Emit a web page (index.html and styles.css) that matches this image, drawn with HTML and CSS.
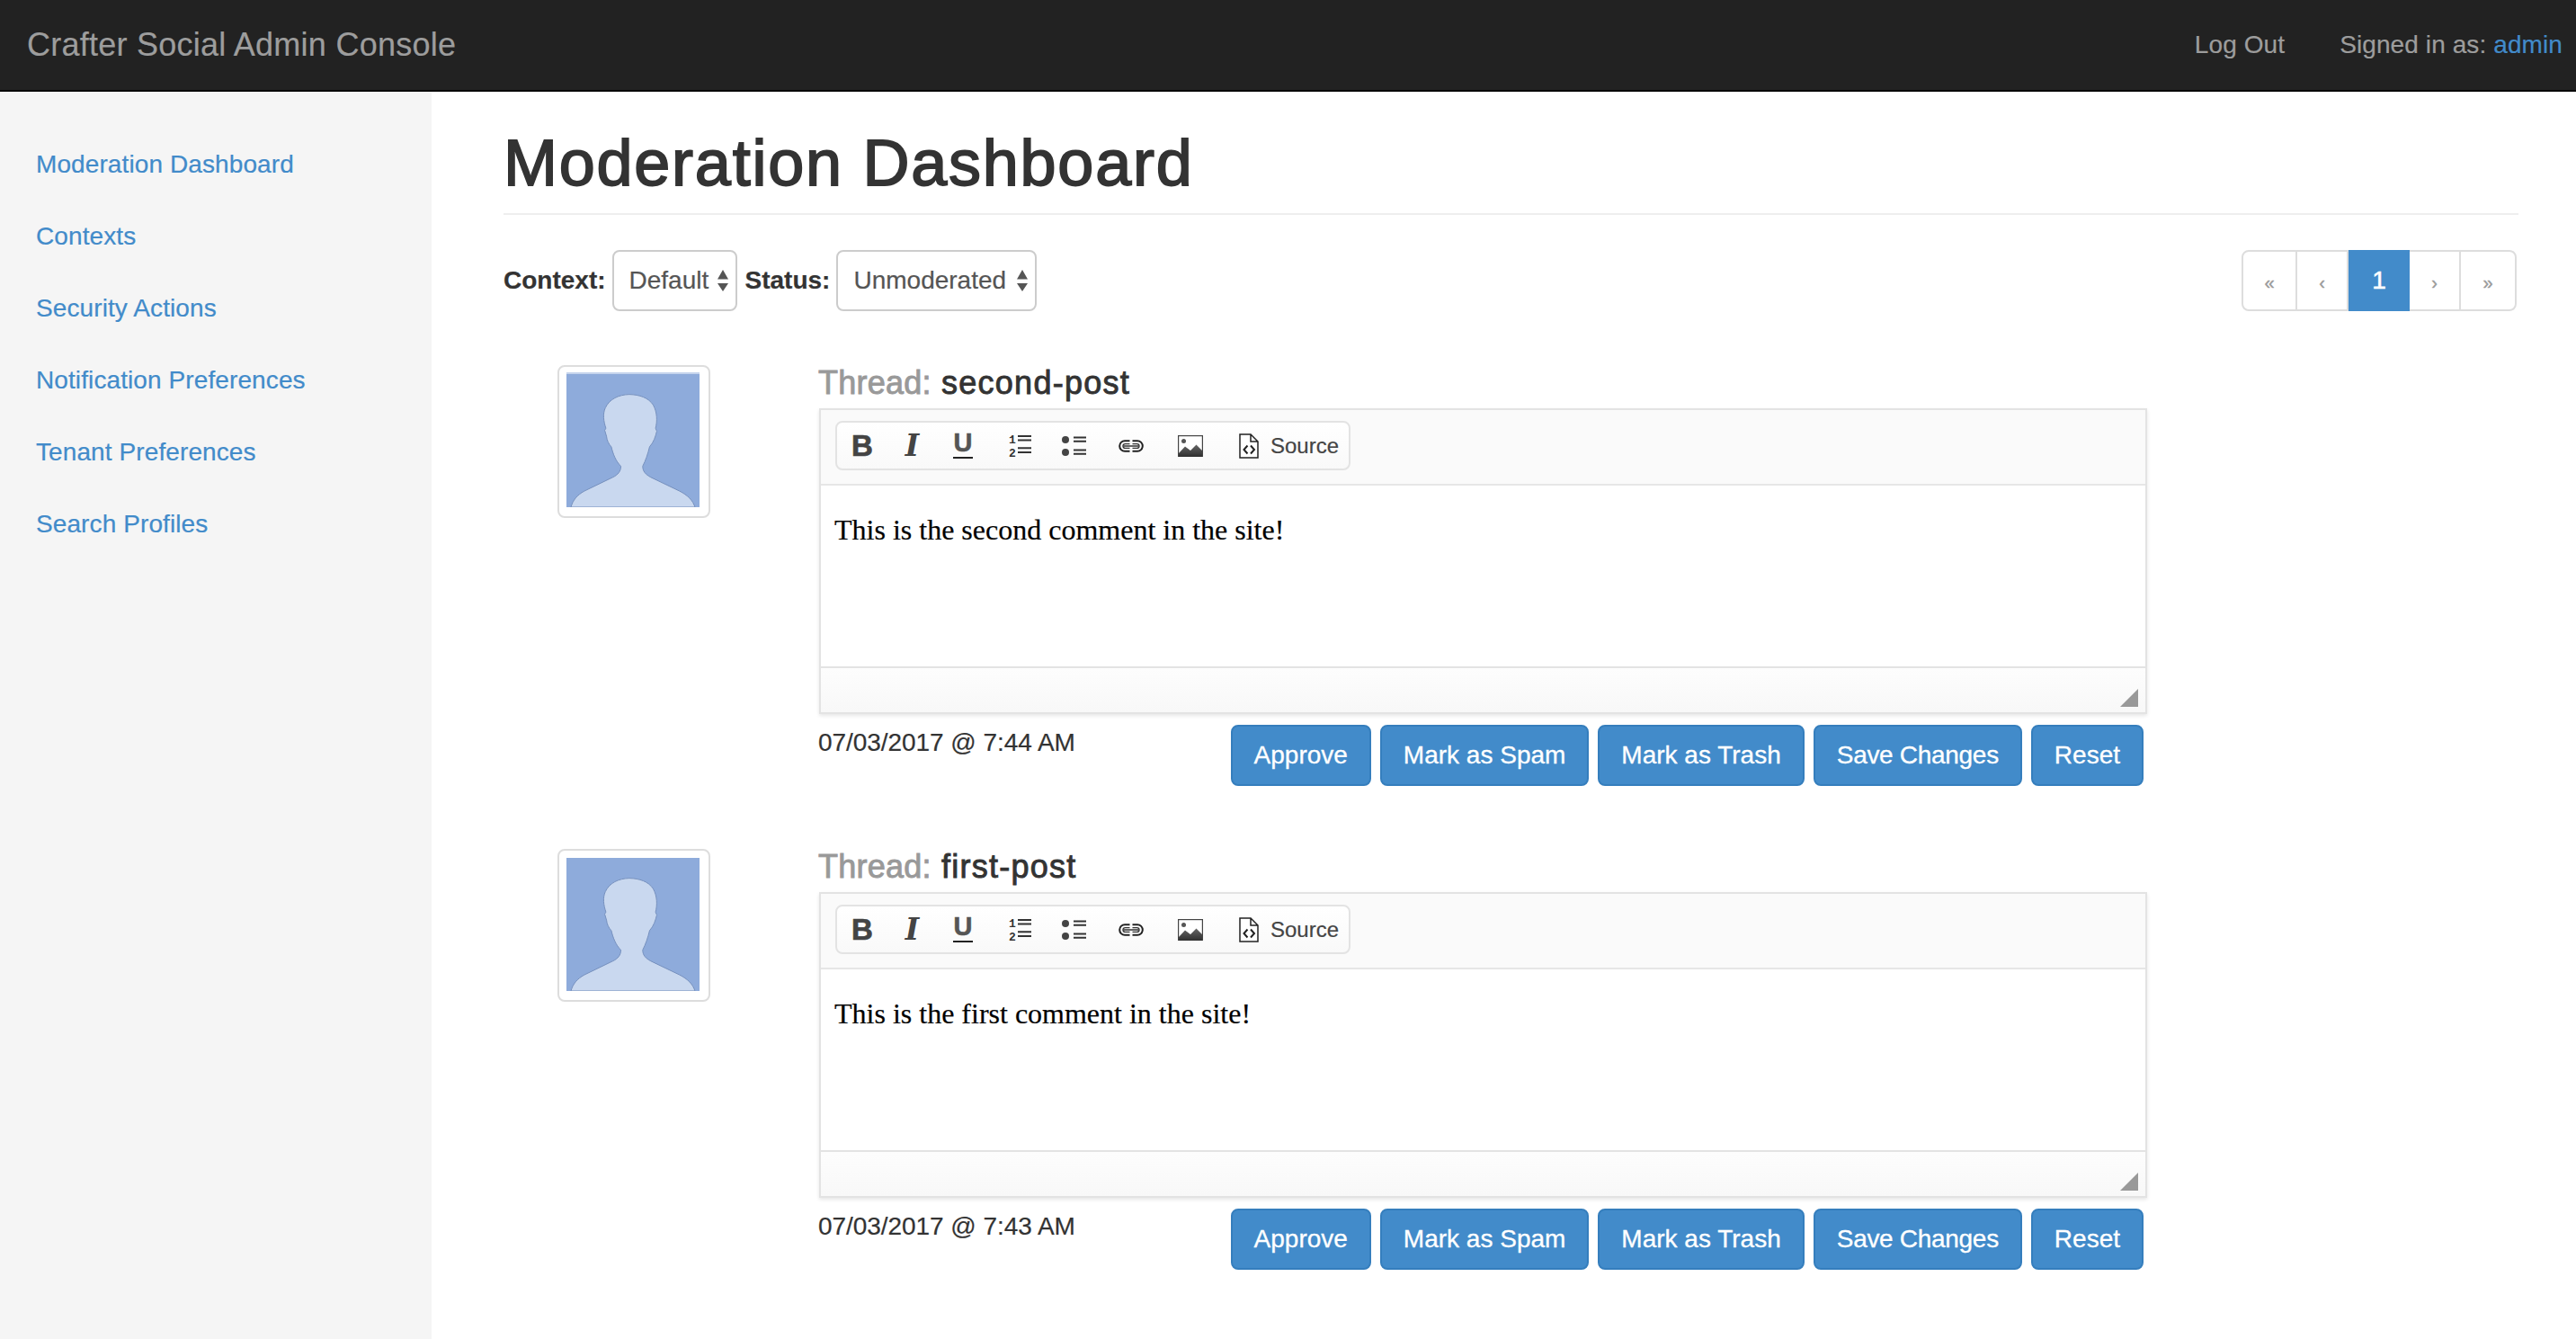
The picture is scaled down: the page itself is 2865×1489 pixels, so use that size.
FILE: index.html
```html
<!DOCTYPE html>
<html lang="en">
<head>
<meta charset="utf-8">
<title>Crafter Social Admin Console</title>
<link rel="stylesheet" href="styles.css">
</head>
<body>
<svg class="defs" width="0" height="0" aria-hidden="true">
  <defs>
    <symbol id="avatar" viewBox="90 77 445 445">
      <rect x="90" y="77" width="445" height="445" fill="#8eabdb"/>
      <path d="M105 522C112 498 125 482 150 468L245 422C262 414 272 402 272 385C255 368 246 345 240 320C232 312 225 298 224 285L218 265L222 258C214 235 211 210 220 190C234 160 265 146 300 145C335 146 364 156 380 180C394 205 394 235 388 258L392 268C388 285 382 305 368 320C362 345 355 365 345 385C345 402 354 412 372 422L468 468C495 482 512 498 520 522Z" fill="#c9d8ef" stroke="#7590bd" stroke-width="3"/>
    </symbol>
    <symbol id="ic-ol" viewBox="0 0 26 25">
      <text x="0" y="10" class="ic-digit">1</text>
      <text x="0" y="24.5" class="ic-digit">2</text>
      <path d="M10 2H25M10 6.4H25M10 15.3H25M10 20H25" stroke="#333" stroke-width="2" fill="none"/>
    </symbol>
    <symbol id="ic-ul" viewBox="0 0 27 25">
      <circle cx="4" cy="6" r="4" fill="#444"/>
      <circle cx="4" cy="20" r="4" fill="#444"/>
      <path d="M13 3.5H27M13 7.7H27M13 17.5H27M13 21.7H27" stroke="#333" stroke-width="2" fill="none"/>
    </symbol>
    <symbol id="ic-link" viewBox="0 0 28 14">
      <path d="M12.5 1.2H7A5.8 5.8 0 0 0 7 12.8H12.5M15.5 1.2H21A5.8 5.8 0 0 1 21 12.8H15.5" stroke="#222" stroke-width="2" fill="none"/>
      <path d="M12.5 4.6H7.4A2.4 2.4 0 0 0 7.4 9.4H12.5M15.5 4.6H20.6A2.4 2.4 0 0 1 20.6 9.4H15.5M6 7H22" stroke="#333" stroke-width="1.4" fill="none"/>
    </symbol>
    <symbol id="ic-image" viewBox="0 0 28 24">
      <defs>
        <linearGradient id="hill" x1="0" y1="0" x2="0" y2="1">
          <stop offset="0" stop-color="#666"/>
          <stop offset="1" stop-color="#2f2f2f"/>
        </linearGradient>
      </defs>
      <rect x="0.6" y="0.6" width="26.8" height="22.8" fill="#fff" stroke="#444" stroke-width="1.2"/>
      <circle cx="6.5" cy="6.5" r="2.5" fill="#555"/>
      <path d="M1 20L8 12.5L14 17L20.5 10.5L27 17V24H1Z" fill="url(#hill)"/>
    </symbol>
    <symbol id="ic-doc" viewBox="0 0 22 28">
      <path d="M1 1H13L21 9V27H1Z M13 1V9H21" fill="#fff" stroke="#222" stroke-width="1.5"/>
      <path d="M9.5 13.5L5.5 18L9.5 22.5M13 13.5L17 18L13 22.5" fill="none" stroke="#222" stroke-width="2"/>
    </symbol>
    <symbol id="ic-updown" viewBox="0 0 12 24">
      <path d="M6 0L12 10.5H0Z M0 15H12L6 24Z" fill="#555"/>
    </symbol>
  </defs>
</svg>

<header class="topbar">
  <a class="brand">Crafter Social Admin Console</a>
  <nav class="topnav">
    <a class="topnav-link">Log Out</a>
    <span class="topnav-user">Signed in as: <a class="topnav-name">admin</a></span>
  </nav>
</header>

<div class="layout">
  <aside class="sidebar">
    <a class="side-link">Moderation Dashboard</a>
    <a class="side-link">Contexts</a>
    <a class="side-link">Security Actions</a>
    <a class="side-link">Notification Preferences</a>
    <a class="side-link">Tenant Preferences</a>
    <a class="side-link">Search Profiles</a>
  </aside>

  <main class="main">
    <h1 class="page-title">Moderation Dashboard</h1>

    <div class="filters">
      <div class="filter-group">
        <label class="filter-label">Context:</label>
        <div class="select select-context"><span>Default</span><svg class="select-arrows"><use href="#ic-updown"/></svg></div>
        <label class="filter-label">Status:</label>
        <div class="select select-status"><span>Unmoderated</span><svg class="select-arrows"><use href="#ic-updown"/></svg></div>
      </div>
      <ul class="pagination">
        <li class="page-item page-arrow">«</li>
        <li class="page-item page-arrow">‹</li>
        <li class="page-item page-active">1</li>
        <li class="page-item page-arrow">›</li>
        <li class="page-item page-arrow">»</li>
      </ul>
    </div>

    <article class="post">
      <div class="thumb thumb-first"><svg class="thumb-img"><use href="#avatar"/></svg></div>
      <div class="post-body">
        <h4 class="thread"><span class="thread-key">Thread:</span> second-post</h4>
        <div class="editor">
          <div class="editor-top">
            <div class="toolbar">
              <span class="tool tool-b">B</span>
              <span class="tool tool-i">I</span>
              <span class="tool tool-u">U</span>
              <span class="tool"><svg class="ic ic-ol"><use href="#ic-ol"/></svg></span>
              <span class="tool"><svg class="ic ic-ul"><use href="#ic-ul"/></svg></span>
              <span class="tool"><svg class="ic ic-link"><use href="#ic-link"/></svg></span>
              <span class="tool"><svg class="ic ic-image"><use href="#ic-image"/></svg></span>
              <span class="tool tool-source"><svg class="ic ic-doc"><use href="#ic-doc"/></svg>Source</span>
            </div>
          </div>
          <div class="editor-content">This is the second comment in the site!</div>
          <div class="editor-bottom"><span class="resizer"></span></div>
        </div>
        <div class="post-foot">
          <span class="post-date">07/03/2017 @ 7:44 AM</span>
          <div class="actions">
            <button class="btn">Approve</button>
            <button class="btn">Mark as Spam</button>
            <button class="btn">Mark as Trash</button>
            <button class="btn btn-save">Save Changes</button>
            <button class="btn">Reset</button>
          </div>
        </div>
      </div>
    </article>

    <article class="post">
      <div class="thumb"><svg class="thumb-img"><use href="#avatar"/></svg></div>
      <div class="post-body">
        <h4 class="thread"><span class="thread-key">Thread:</span> first-post</h4>
        <div class="editor">
          <div class="editor-top">
            <div class="toolbar">
              <span class="tool tool-b">B</span>
              <span class="tool tool-i">I</span>
              <span class="tool tool-u">U</span>
              <span class="tool"><svg class="ic ic-ol"><use href="#ic-ol"/></svg></span>
              <span class="tool"><svg class="ic ic-ul"><use href="#ic-ul"/></svg></span>
              <span class="tool"><svg class="ic ic-link"><use href="#ic-link"/></svg></span>
              <span class="tool"><svg class="ic ic-image"><use href="#ic-image"/></svg></span>
              <span class="tool tool-source"><svg class="ic ic-doc"><use href="#ic-doc"/></svg>Source</span>
            </div>
          </div>
          <div class="editor-content">This is the first comment in the site!</div>
          <div class="editor-bottom"><span class="resizer"></span></div>
        </div>
        <div class="post-foot">
          <span class="post-date">07/03/2017 @ 7:43 AM</span>
          <div class="actions">
            <button class="btn">Approve</button>
            <button class="btn">Mark as Spam</button>
            <button class="btn">Mark as Trash</button>
            <button class="btn btn-save">Save Changes</button>
            <button class="btn">Reset</button>
          </div>
        </div>
      </div>
    </article>
  </main>
</div>
</body>
</html>
```

FILE: styles.css
```css
* { box-sizing: border-box; }
html, body { margin: 0; padding: 0; }
body {
  font-family: "Liberation Sans", Arial, sans-serif;
  font-size: 28px;
  line-height: 40px;
  color: #333;
  background: #fff;
  -webkit-text-stroke: .2px;
}
.defs { display: block; height: 0; }
.ic-digit { font: 700 13px "Liberation Mono", monospace; fill: #333; }

.topbar {
  height: 102px;
  background: #222;
  border-bottom: 2px solid #080808;
  display: flex;
  align-items: center;
  justify-content: space-between;
  padding: 0 15px 0 30px;
}
.brand { font-size: 36px; color: #9d9d9d; letter-spacing: .25px; }
.topnav { display: flex; gap: 61px; color: #9d9d9d; letter-spacing: .1px; }
.topnav-name { color: #428bca; }

.layout { display: flex; min-height: calc(100vh - 102px); }
.sidebar {
  width: 480px;
  flex: none;
  background: #f5f5f5;
  padding: 41px 0 0 40px;
  display: flex;
  flex-direction: column;
}
.side-link { height: 80px; line-height: 80px; color: #428bca; letter-spacing: .1px; }

.main { flex: 1; padding: 0 64px 0 80px; min-width: 0; }
.page-title {
  margin: 39px 0 39px;
  padding-bottom: 16px;
  border-bottom: 2px solid #eee;
  font-size: 72px;
  line-height: 80px;
  font-weight: 400;
  letter-spacing: 1.75px;
  -webkit-text-stroke: 1.8px #333;
}

.filters { display: flex; justify-content: space-between; height: 68px; }
.filter-group { display: flex; align-items: center; }
.filter-label { font-weight: 700; margin-right: 7px; }
.select {
  height: 68px;
  display: flex;
  align-items: center;
  border: 2px solid #ccc;
  border-radius: 8px;
  color: #555;
  padding-left: 17px;
  margin-right: 9px;
}
.select-context { width: 139px; }
.select-status { width: 223px; }
.select-arrows { width: 12px; height: 24px; margin-left: auto; margin-right: 8px; }

.pagination {
  list-style: none;
  margin: 0 2px 0 0;
  padding: 0;
  display: grid;
  grid-template-columns: 62px 57px 68px 57px 62px;
  height: 68px;
  width: 306px;
}
.page-item {
  border: 2px solid #ddd;
  margin-left: -2px;
  color: #999;
  display: flex;
  align-items: center;
  justify-content: center;
  background: #fff;
}
.page-arrow { font-size: 20px; padding-top: 4px; -webkit-text-stroke: .4px; }
.page-item:first-child { border-radius: 8px 0 0 8px; margin-left: 0; }
.page-item:last-child { border-radius: 0 8px 8px 0; }
.page-active {
  background: #428bca;
  border-color: #428bca;
  color: #fff;
  position: relative;
  margin-left: 0;
  -webkit-text-stroke: .6px;
}

.post { display: flex; margin-top: 60px; padding-left: 60px; }
.post + .post { margin-top: 70px; }
.thumb {
  width: 170px;
  height: 170px;
  flex: none;
  padding: 8px;
  border: 2px solid #ddd;
  border-radius: 8px;
  background: #fff;
  margin-right: 121px;
}
.thumb-img { display: block; width: 148px; height: 148px; }
.thumb-first .thumb-img { box-shadow: 0 -2px 0 #c5d4ec; }
.post-body { width: 1477px; }
.thread {
  margin: 0 0 8px -1px;
  font-size: 36px;
  line-height: 40px;
  font-weight: 400;
  letter-spacing: 1.25px;
  -webkit-text-stroke: .9px;
}
.thread-key { color: #999; letter-spacing: .25px; }

.editor {
  height: 340px;
  border: 2px solid #e3e3e3;
  box-shadow: 0 2px 4px rgba(0, 0, 0, .1);
  display: flex;
  flex-direction: column;
  background: #fff;
}
.editor-top {
  height: 84px;
  flex: none;
  background: #fafafa;
  border-bottom: 2px solid #e6e6e6;
  padding: 12px 0 0 16px;
}
.toolbar {
  width: 573px;
  height: 55px;
  border: 2px solid #e3e3e3;
  border-radius: 8px;
  background: linear-gradient(#fff, #f9f9f9);
  display: grid;
  grid-template-columns: 56px 55px 58px 70px 48px 80px 52px 1fr;
  align-items: center;
  justify-items: center;
  color: #444;
}
.tool { display: flex; align-items: center; justify-content: center; height: 100%; -webkit-text-stroke: 0; }
.tool-b { font: 700 33px "Liberation Sans", sans-serif; color: #444; -webkit-text-stroke: .7px; }
.tool-i { font: italic 700 33px "DejaVu Serif", serif; color: #444; }
.tool-u { font: 700 29px "Liberation Sans", sans-serif; color: #555; position: relative; padding-bottom: 6px; -webkit-text-stroke: .6px; }
.tool-u::after {
  content: "";
  position: absolute;
  left: 50%;
  bottom: 11px;
  width: 22px;
  height: 2px;
  margin-left: -11px;
  background: #222;
}
.ic { display: block; }
.ic-ol { width: 26px; height: 25px; }
.ic-ul { width: 27px; height: 25px; }
.ic-link { width: 28px; height: 14px; }
.ic-image { width: 28px; height: 24px; }
.ic-doc { width: 22px; height: 28px; margin-right: 13px; }
.tool-source { font-size: 24px; color: #444; justify-content: flex-start; justify-self: start; padding-left: 28px; -webkit-text-stroke: .2px; }

.editor-content {
  flex: 1;
  padding: 30px 15px 0;
  font: 32px/38px "Liberation Serif", "Times New Roman", serif;
  color: #000;
}
.editor-bottom {
  height: 51px;
  flex: none;
  background: linear-gradient(#fdfdfd, #f8f8f8);
  border-top: 2px solid #e3e3e3;
  display: flex;
  justify-content: flex-end;
  align-items: flex-end;
  padding: 0 8px 6px 0;
}
.resizer {
  width: 20px;
  height: 20px;
  background: #999;
  clip-path: polygon(100% 0, 100% 100%, 0 100%);
}

.post-foot {
  display: flex;
  justify-content: space-between;
  align-items: flex-start;
  margin-top: 12px;
  padding-right: 4px;
}
.post-date { margin-left: -1px; letter-spacing: -.05px; }
.actions { display: flex; gap: 10px; }
.btn {
  height: 68px;
  padding: 12px 24px;
  border: 2px solid #357ebd;
  border-radius: 8px;
  background: #428bca;
  color: #fff;
  font: 28px/40px "Liberation Sans", Arial, sans-serif;
  -webkit-text-stroke: .3px;
}
.btn-save { letter-spacing: -.3px; }
```
